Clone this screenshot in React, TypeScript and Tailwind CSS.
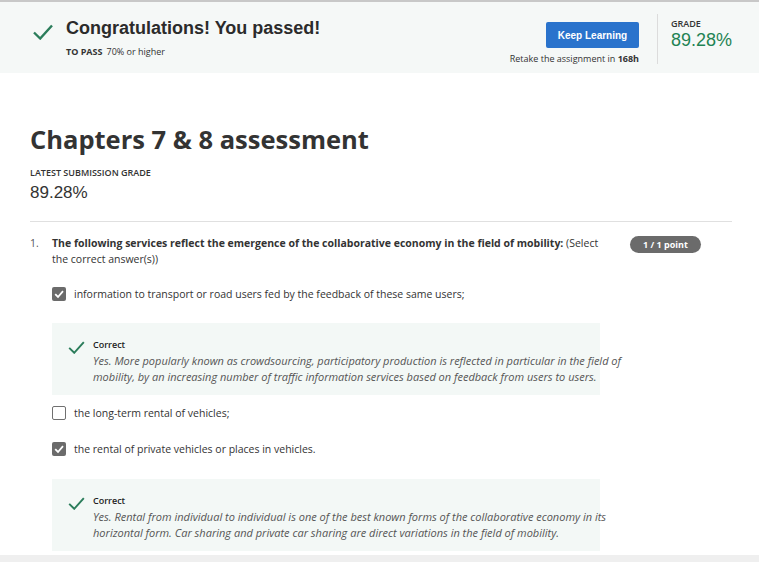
import React from "react";

const OS = { fontFamily: '"Open Sans", "Noto Sans", sans-serif' };
const AR = { fontFamily: '"Liberation Sans", Arial, sans-serif' };

function BigCheck({ className }: { className?: string }) {
  return (
    <svg className={className} viewBox="0 0 20 16" fill="none">
      <path d="M1 8.5 L7.2 14.5 L19 1.5" stroke="#2b7d5b" strokeWidth="2.4" strokeLinecap="butt" strokeLinejoin="miter" />
    </svg>
  );
}

function Box({ checked }: { checked: boolean }) {
  if (checked)
    return (
      <div className="w-[14px] h-[14px] rounded-[2px] bg-[#6b6b6b] flex items-center justify-center flex-none">
        <svg viewBox="0 0 14 14" className="w-[14px] h-[14px]" fill="none">
          <path d="M3.2 7.2 L6 10 L11 4.2" stroke="#fff" strokeWidth="1.8" />
        </svg>
      </div>
    );
  return <div className="w-[14px] h-[14px] rounded-[2px] border-[1.5px] border-[#707070] bg-white flex-none" />;
}

function Option({ checked, text, mt }: { checked: boolean; text: string; mt: string }) {
  return (
    <div className={`flex items-center h-[16px] ${mt}`}>
      <Box checked={checked} />
      <span className="ml-[8px] text-[10.5px] leading-[16px] text-[#333]" style={OS}>
        {text}
      </span>
    </div>
  );
}

function Feedback({ text, mt }: { text: string; mt: string }) {
  return (
    <div className={`w-[548px] bg-[#f3f8f6] pt-[16px] pb-[10px] ${mt}`}>
      <div className="flex">
        <div className="w-[41px] flex-none flex justify-end pr-[8px] pt-[2px]">
          <BigCheck className="w-[17px] h-[13px]" />
        </div>
        <div className="w-[545px] flex-none">
          <div className="text-[9px] leading-[12px] font-semibold text-[#222]" style={OS}>
            Correct
          </div>
          <div className="mt-[2px] text-[11px] leading-[16px] italic text-[#555]" style={OS}>
            {text}
          </div>
        </div>
      </div>
    </div>
  );
}

export default function App() {
  return (
    <div className="w-[759px] h-[562px] bg-white overflow-hidden flex flex-col text-[#333]">
      <div className="h-[2px] bg-[#c8c8c8] flex-none" />
      <div className="h-[71px] bg-[#f5f8f7] flex flex-none">
        <div className="flex pl-[33px]">
          <BigCheck className="w-[20px] h-[16px] mt-[22px]" />
          <div className="ml-[13px] pt-[16px]">
            <div className="text-[18px] leading-[20px] font-bold text-[#2b2b2b]" style={AR}>
              Congratulations! You passed!
            </div>
            <div className="mt-[8px] text-[9px] leading-[12px] text-[#333]" style={OS}>
              <span className="font-bold">TO PASS</span>
              <span className="ml-[4px]">70% or higher</span>
            </div>
          </div>
        </div>
        <div className="ml-auto flex">
          <div className="flex flex-col items-end pt-[20px]">
            <div
              className="w-[93px] h-[26px] rounded-[2px] bg-[#2a73cc] text-white text-[10px] font-bold flex items-center justify-center"
              style={AR}
            >
              Keep Learning
            </div>
            <div className="mt-[5px] text-[9px] leading-[12px] text-[#333]" style={OS}>
              Retake the assignment in <span className="font-bold">168h</span>
            </div>
          </div>
          <div className="ml-[18px] mt-[12px] w-px h-[50px] bg-[#dcdcdc]" />
          <div className="ml-[13px] w-[88px] pt-[16px]">
            <div className="text-[9px] leading-[12px] font-semibold text-[#333]" style={OS}>
              GRADE
            </div>
            <div className="text-[18px] leading-[20px] text-[#1f8354]" style={AR}>
              89.28%
            </div>
          </div>
        </div>
      </div>

      <div className="flex-1 pl-[30px] pr-[27px] flex flex-col">
        <div className="mt-[50px] text-[25.5px] leading-[32px] font-bold text-[#333]" style={OS}>
          Chapters 7 &amp; 8 assessment
        </div>
        <div className="mt-[12px] text-[9px] leading-[12px] font-semibold text-[#333]" style={OS}>
          LATEST SUBMISSION GRADE
        </div>
        <div className="mt-[4px] text-[17px] leading-[20px] text-[#333]" style={AR}>
          89.28%
        </div>
        <div className="mt-[18px] h-px bg-[#e0e0e0]" />

        <div className="mt-[13px] flex">
          <div className="w-[22px] flex-none text-[10.5px] leading-[16px] text-[#555]" style={OS}>
            1.
          </div>
          <div className="w-[556px] flex-none text-[10.5px] leading-[16px] text-[#333]" style={OS}>
            <span className="font-bold">
              The following services reflect the emergence of the collaborative economy in the field of mobility:
            </span>{" "}
            (Select the correct answer(s))
          </div>
          <div
            className="ml-[22px] mt-[1px] w-[71px] h-[17px] rounded-full bg-[#6b6b6b] text-white text-[9px] font-bold flex items-center justify-center flex-none"
            style={OS}
          >
            1 / 1 point
          </div>
        </div>

        <div className="pl-[22px] flex flex-col">
          <Option
            checked
            mt="mt-[19px]"
            text="information to transport or road users fed by the feedback of these same users;"
          />
          <Feedback
            mt="mt-[21px]"
            text="Yes. More popularly known as crowdsourcing, participatory production is reflected in particular in the field of mobility, by an increasing number of traffic information services based on feedback from users to users."
          />
          <Option checked={false} mt="mt-[10px]" text="the long-term rental of vehicles;" />
          <Option checked mt="mt-[20px]" text="the rental of private vehicles or places in vehicles." />
          <Feedback
            mt="mt-[22px]"
            text="Yes. Rental from individual to individual is one of the best known forms of the collaborative economy in its horizontal form. Car sharing and private car sharing are direct variations in the field of mobility."
          />
        </div>
      </div>
      <div className="h-[7px] bg-[#efefef] flex-none" />
    </div>
  );
}
